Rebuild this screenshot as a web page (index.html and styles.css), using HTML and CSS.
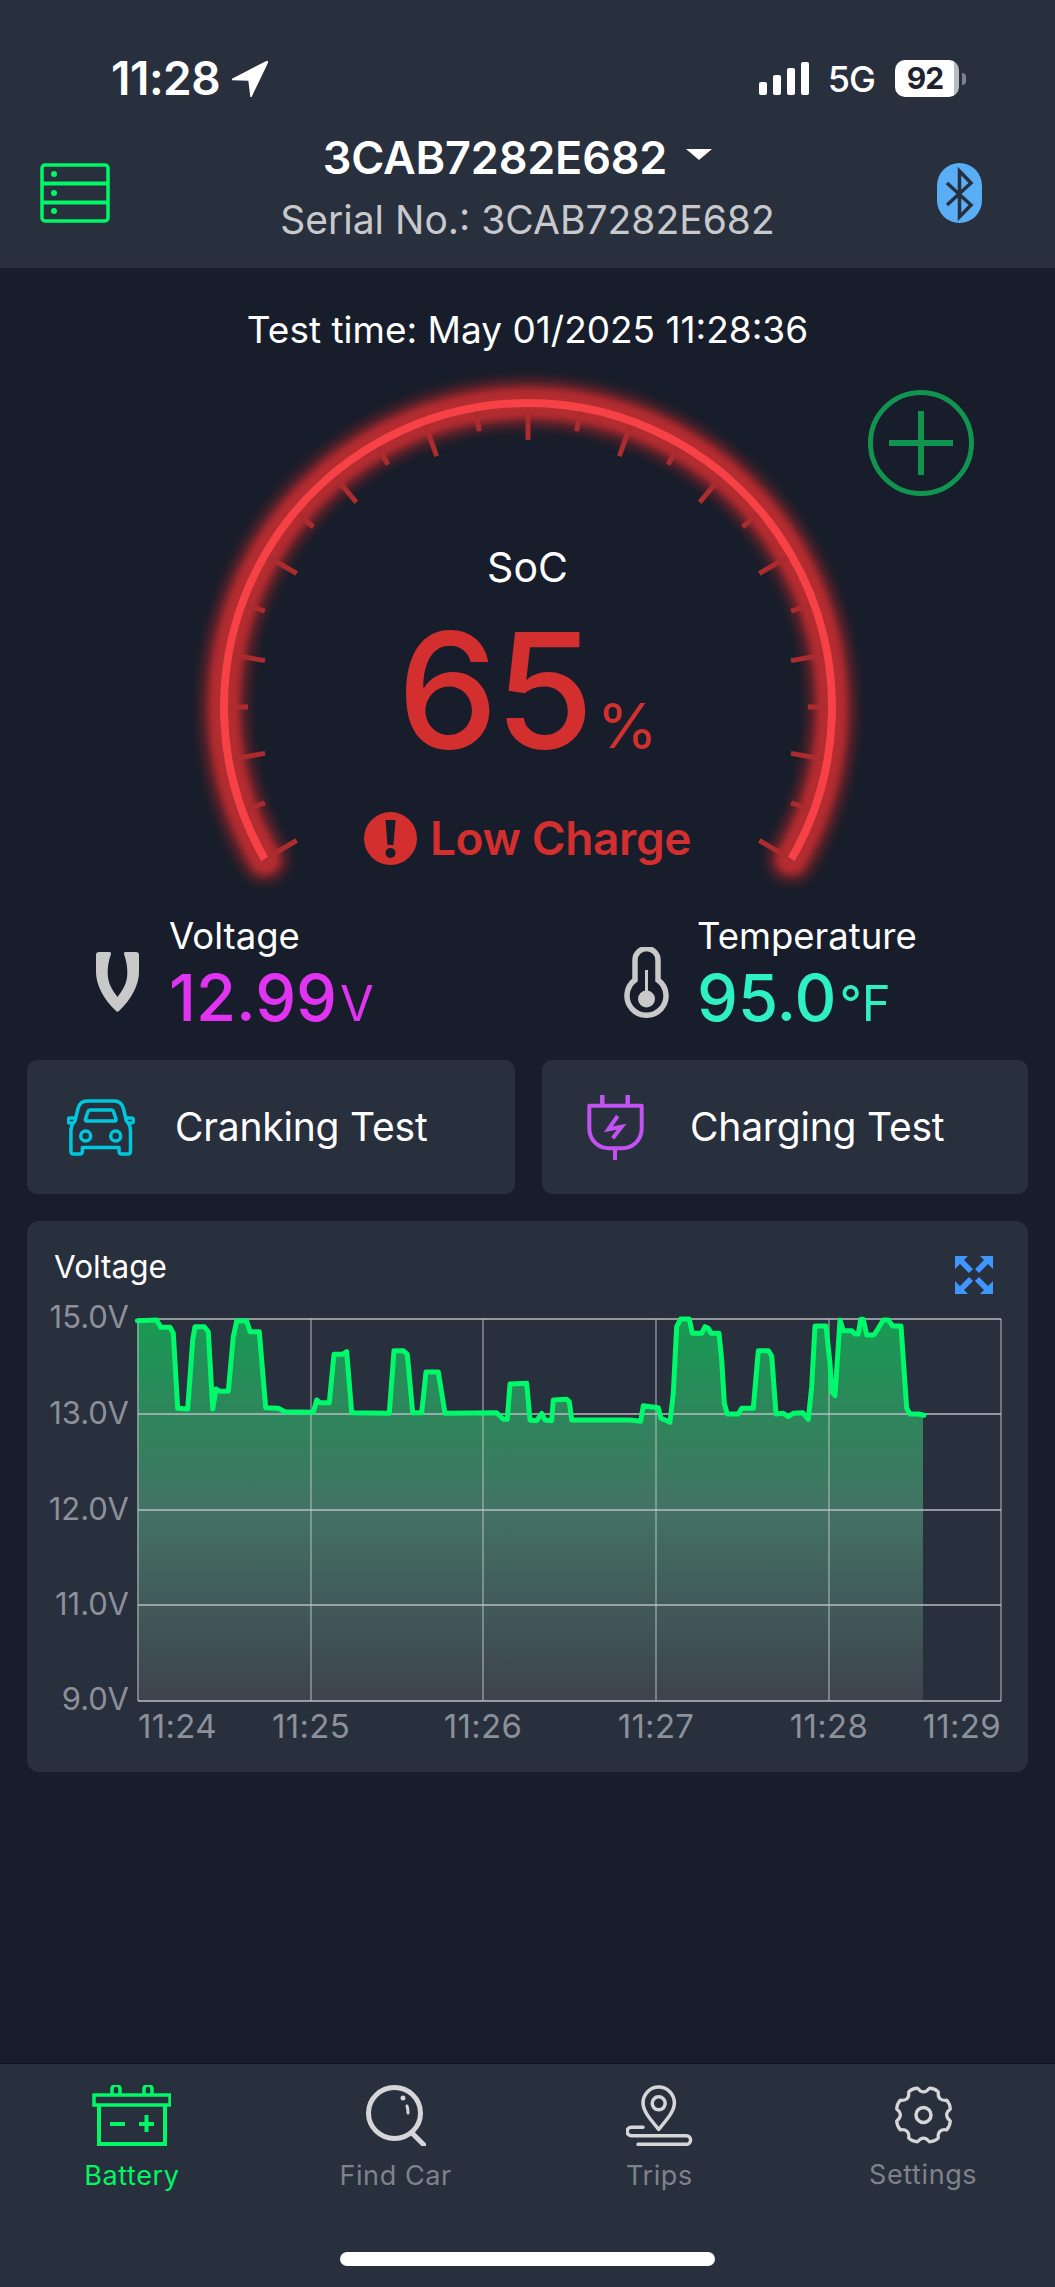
FILE: index.html
```html
<!DOCTYPE html>
<html lang="en">
<head>
<meta charset="utf-8">
<title>Battery</title>
<link rel="stylesheet" href="styles.css">
</head>
<body>
<div class="page">
  <header class="header">
    <div class="status">
      <div class="status-left">
        <span class="clock">11:28</span>
        <svg class="loc" viewBox="0 0 36 36"><path d="M36 0 0 18.500 17 19 19 35.500Z" stroke="#fff" stroke-width="1.500" stroke-linejoin="round" fill="#fff"/></svg>
      </div>
      <div class="status-right">
        <div class="signal"><i class="b1"></i><i class="b2"></i><i class="b3"></i><i class="b4"></i></div>
        <span class="net">5G</span>
        <div class="batt"><span class="batt-num">92</span></div>
        <div class="batt-nub"></div>
      </div>
    </div>
    <div class="titlebar">
      <svg class="ic-list" viewBox="0 0 70 60" fill="none" stroke="#00f765" stroke-width="3.500">
        <rect x="2" y="2" width="66" height="56" rx="3"/><path d="M2 20.500H68M2 39.500H68" stroke-width="4"/>
        <circle cx="14" cy="11" r="3" fill="#00f765" stroke="none"/><circle cx="14" cy="30" r="3" fill="#00f765" stroke="none"/><circle cx="14" cy="48" r="3" fill="#00f765" stroke="none"/>
      </svg>
      <div class="title-mid">
        <div class="name-row"><span class="name">3CAB7282E682</span><svg class="caret" viewBox="0 0 26 11"><path d="M0 0H26L13 11Z" fill="#fff"/></svg></div>
        <div class="serial">Serial No.: 3CAB7282E682</div>
      </div>
      <svg class="ic-bt" viewBox="0 0 45 60">
        <rect x="0" y="0" width="45" height="60" rx="22.500" fill="#5aaef5"/>
        <path d="M10 20 34 42 22.500 54V8L34 20 10 42" fill="none" stroke="#27303e" stroke-width="3.500"/>
      </svg>
    </div>
  </header>

  <main class="main">
    <div class="test-time">Test time: May 01/2025 11:28:36</div>

    <section class="gauge">
      <svg class="gauge-svg" viewBox="0 352 1055 560">
        <path class="arc-glow-wide" d="M264.700 859A304 304 0 1 1 791.300 859" />
        <path class="arc-glow" d="M264.700 859A304 304 0 1 1 791.300 859" />
        <g class="ticks">
          <line class="t-long" x1="528" y1="403" x2="528" y2="440"/>
          <line x1="528" y1="403" x2="528" y2="427" transform="rotate(10 528 707)"/>
          <line x1="528" y1="403" x2="528" y2="440" transform="rotate(20 528 707)"/>
          <line x1="528" y1="403" x2="528" y2="427" transform="rotate(30 528 707)"/>
          <line x1="528" y1="403" x2="528" y2="440" transform="rotate(40 528 707)"/>
          <line x1="528" y1="403" x2="528" y2="427" transform="rotate(50 528 707)"/>
          <line x1="528" y1="403" x2="528" y2="440" transform="rotate(60 528 707)"/>
          <line x1="528" y1="403" x2="528" y2="427" transform="rotate(70 528 707)"/>
          <line x1="528" y1="403" x2="528" y2="440" transform="rotate(80 528 707)"/>
          <line x1="528" y1="403" x2="528" y2="427" transform="rotate(90 528 707)"/>
          <line x1="528" y1="403" x2="528" y2="440" transform="rotate(100 528 707)"/>
          <line x1="528" y1="403" x2="528" y2="427" transform="rotate(110 528 707)"/>
          <line x1="528" y1="403" x2="528" y2="440" transform="rotate(120 528 707)"/>
          <line x1="528" y1="403" x2="528" y2="427" transform="rotate(-10 528 707)"/>
          <line x1="528" y1="403" x2="528" y2="440" transform="rotate(-20 528 707)"/>
          <line x1="528" y1="403" x2="528" y2="427" transform="rotate(-30 528 707)"/>
          <line x1="528" y1="403" x2="528" y2="440" transform="rotate(-40 528 707)"/>
          <line x1="528" y1="403" x2="528" y2="427" transform="rotate(-50 528 707)"/>
          <line x1="528" y1="403" x2="528" y2="440" transform="rotate(-60 528 707)"/>
          <line x1="528" y1="403" x2="528" y2="427" transform="rotate(-70 528 707)"/>
          <line x1="528" y1="403" x2="528" y2="440" transform="rotate(-80 528 707)"/>
          <line x1="528" y1="403" x2="528" y2="427" transform="rotate(-90 528 707)"/>
          <line x1="528" y1="403" x2="528" y2="440" transform="rotate(-100 528 707)"/>
          <line x1="528" y1="403" x2="528" y2="427" transform="rotate(-110 528 707)"/>
          <line x1="528" y1="403" x2="528" y2="440" transform="rotate(-120 528 707)"/>
        </g>
        <path class="arc-core" d="M264.700 859A304 304 0 1 1 791.300 859" />
      </svg>
      <div class="gauge-center">
        <div class="soc">SoC</div>
        <div class="soc-val">65<span class="soc-pct">%</span></div>
        <div class="soc-state">
          <svg class="ic-warn" viewBox="0 0 53 53"><circle cx="26.500" cy="26.500" r="26.500" fill="#d32f2f"/><path d="M21.500 8H31.500L29.500 33H23.500Z" fill="#171d2a"/><circle cx="26.500" cy="41" r="5" fill="#171d2a"/></svg>
          <span>Low Charge</span>
        </div>
      </div>
      <svg class="ic-plus" viewBox="0 0 106 106" fill="none" stroke="#11944f" stroke-width="5"><circle cx="53" cy="53" r="50.500"/><path d="M53 21V85M21 53H85" stroke-width="6"/></svg>
    </section>

    <section class="metrics">
      <div class="metric">
        <svg class="ic-volt" viewBox="0 0 43 60"><path d="M0 3Q0 0 3 0H13Q15.500 0 15 2C12.500 9 11.500 16 11.700 22 12 31 16 38 21.500 45 27 38 31 31 31.300 22 31.500 16 30.500 9 28 2Q27.500 0 30 0H40Q43 0 43 3V20C43 32 36 47 23 59Q21.500 60.500 20 59C7 47 0 32 0 20Z" fill="#c9c9c9"/></svg>
        <div>
          <div class="m-label">Voltage</div>
          <div class="m-value volt">12.99<span class="m-unit">V</span></div>
        </div>
      </div>
      <div class="metric temp-metric">
        <svg class="ic-temp" viewBox="0 0 45 72" fill="none" stroke="#c9c9c9" stroke-width="5.500"><path d="M11 33V13A11.500 11.500 0 0 1 34 13V33A19.500 19.500 0 1 1 11 33Z"/><path d="M22.500 23V48" stroke-width="3"/><circle cx="22.500" cy="52" r="8.500" fill="#c9c9c9" stroke="none"/></svg>
        <div>
          <div class="m-label">Temperature</div>
          <div class="m-value temp">95.0<span class="m-unit">°F</span></div>
        </div>
      </div>
    </section>

    <section class="actions">
      <div class="action">
        <svg class="ic-car" viewBox="0 0 68 57" fill="none" stroke="#00c8dc" stroke-width="3.500" stroke-linejoin="round" stroke-linecap="round">
          <path d="M8 22 11 9.500Q13 2 20 2H47.400Q54.400 2 56.400 9.500L59.400 22Q63.500 26 63.500 32V52Q63.500 55 61 55H54.500Q52 55 52 52V48.500H15.400V52Q15.400 55 13 55H6.400Q3.900 55 3.900 52V32Q3.900 26 8 22Z"/>
          <path d="M23 11H44.500Q46 11 46.500 12.500L49 20Q49.500 22 47.500 22H20Q18 22 18.500 20L21 12.500Q21.500 11 23 11Z"/>
          <path d="M8 19H3Q1 19 1 21.500 1 24 3 24H6M59.400 19H64.400Q66.400 19 66.400 21.500 66.400 24 64.400 24H61.400"/>
          <circle cx="18.700" cy="37" r="5"/><circle cx="48.700" cy="37" r="5"/>
        </svg>
        <span>Cranking Test</span>
      </div>
      <div class="action">
        <svg class="ic-plug" viewBox="0 0 57 65" fill="none" stroke="#c252f2" stroke-width="4">
          <path d="M15.300 0V11M40.700 0V11" stroke-width="4.500"/>
          <path d="M2.300 10.700H54.700V33.300C54.700 45 46 53.300 35 53.300H22C11 53.300 2.300 45 2.300 33.300Z" stroke-linejoin="round"/>
          <path d="M28 53.300V65" stroke-width="4"/>
          <path d="M30.700 21 21.300 34.300 34.700 31.700 25.700 43.300"/>
        </svg>
        <span>Charging Test</span>
      </div>
    </section>

    <section class="chart-card">
      <svg class="chart-svg" viewBox="27 1221 1001 551">
        <defs>
          <linearGradient id="area" x1="0" y1="1319" x2="0" y2="1701" gradientUnits="userSpaceOnUse">
            <stop offset="0" stop-color="#189a53"/>
            <stop offset="0.5" stop-color="#437264"/>
            <stop offset="1" stop-color="#3e424e"/>
          </linearGradient>
        </defs>
        <text class="c-title" x="54" y="1278">Voltage</text>
        <g fill="#3f96ff">
          <path d="M955 1256H968L964 1260 973 1269 969 1273 960 1264 955 1269Z"/>
          <path d="M993 1256H980L984 1260 975 1269 979 1273 988 1264 993 1269Z"/>
          <path d="M955 1294H968L964 1290 973 1281 969 1277 960 1286 955 1281Z"/>
          <path d="M993 1294H980L984 1290 975 1281 979 1277 988 1286 993 1281Z"/>
        </g>
        <polygon fill="url(#area)" points="137.300,1701 137.300,1320.700 156.700,1320 160.700,1327.300 170,1327.300 173.300,1333.300 177.700,1408.300 187.700,1409 192.700,1340 195,1326.700 204.300,1326.700 208.300,1331.700 212.700,1409 216,1389 220,1391.300 228.300,1391.300 233.300,1336.700 236.700,1321 246.700,1321 250,1331.700 259.300,1331.700 265.700,1407.700 278.300,1408.300 285,1411.700 313.300,1412.300 316.700,1400 320,1402.700 329.300,1402.700 334,1354.300 342.700,1354.300 346.700,1351.700 351.700,1412.700 389.300,1413.300 394,1350.700 403.300,1350.700 407.300,1354.300 412.700,1412.700 421.700,1412.700 426,1372 438.300,1372 445,1413.300 496.700,1412.700 503.300,1419.300 507.300,1419.300 510,1384 526.700,1383.300 530,1420 536.700,1420.700 541.700,1413.300 545,1420 551.700,1420.700 553.300,1400 566.700,1399.300 569.300,1401.700 571.700,1420 630,1420 640.700,1421.300 643.300,1405.700 658.300,1407.700 661,1418.300 670,1422.300 673.300,1393.300 676.700,1326.700 680.700,1319 689.300,1319 692.300,1333.300 701.700,1333.300 705,1326.700 708.300,1328.300 711,1333.300 719,1333.300 721.700,1360 724.300,1403.300 727.300,1414 738.300,1414 741.700,1408.300 753.300,1408.300 758.300,1350.700 768.300,1350.700 771.700,1356 776,1414 783.300,1413.300 788.300,1416.700 793.300,1413.300 802.700,1412.700 808.300,1419.300 811.700,1386.700 815,1326 826,1326 830,1363.300 831.700,1391.700 835,1395.700 840,1320 843.300,1330.700 851.700,1330.700 855,1334 858.300,1334 860.700,1319.300 863.300,1319.300 866.700,1335 874,1335 878.300,1328.300 883.300,1320 888.300,1320 892.700,1326 901,1326 906.700,1408.300 910,1414 918.300,1414 923,1415.300 923,1701"/>
        <g class="grid-y">
          <line x1="138" x2="1001" y1="1319" y2="1319"/><line x1="138" x2="1001" y1="1414" y2="1414"/><line x1="138" x2="1001" y1="1510" y2="1510"/><line x1="138" x2="1001" y1="1605" y2="1605"/><line x1="138" x2="1001" y1="1701" y2="1701"/>
        </g>
        <g class="grid-x">
          <line x1="138" x2="138" y1="1319" y2="1701"/><line x1="311" x2="311" y1="1319" y2="1701"/><line x1="483" x2="483" y1="1319" y2="1701"/><line x1="656" x2="656" y1="1319" y2="1701"/><line x1="829" x2="829" y1="1319" y2="1701"/><line x1="1001" x2="1001" y1="1319" y2="1701"/>
        </g>
        <polyline class="volt-line" points="137.300,1320.700 156.700,1320 160.700,1327.300 170,1327.300 173.300,1333.300 177.700,1408.300 187.700,1409 192.700,1340 195,1326.700 204.300,1326.700 208.300,1331.700 212.700,1409 216,1389 220,1391.300 228.300,1391.300 233.300,1336.700 236.700,1321 246.700,1321 250,1331.700 259.300,1331.700 265.700,1407.700 278.300,1408.300 285,1411.700 313.300,1412.300 316.700,1400 320,1402.700 329.300,1402.700 334,1354.300 342.700,1354.300 346.700,1351.700 351.700,1412.700 389.300,1413.300 394,1350.700 403.300,1350.700 407.300,1354.300 412.700,1412.700 421.700,1412.700 426,1372 438.300,1372 445,1413.300 496.700,1412.700 503.300,1419.300 507.300,1419.300 510,1384 526.700,1383.300 530,1420 536.700,1420.700 541.700,1413.300 545,1420 551.700,1420.700 553.300,1400 566.700,1399.300 569.300,1401.700 571.700,1420 630,1420 640.700,1421.300 643.300,1405.700 658.300,1407.700 661,1418.300 670,1422.300 673.300,1393.300 676.700,1326.700 680.700,1319 689.300,1319 692.300,1333.300 701.700,1333.300 705,1326.700 708.300,1328.300 711,1333.300 719,1333.300 721.700,1360 724.300,1403.300 727.300,1414 738.300,1414 741.700,1408.300 753.300,1408.300 758.300,1350.700 768.300,1350.700 771.700,1356 776,1414 783.300,1413.300 788.300,1416.700 793.300,1413.300 802.700,1412.700 808.300,1419.300 811.700,1386.700 815,1326 826,1326 830,1363.300 831.700,1391.700 835,1395.700 840,1320 843.300,1330.700 851.700,1330.700 855,1334 858.300,1334 860.700,1319.300 863.300,1319.300 866.700,1335 874,1335 878.300,1328.300 883.300,1320 888.300,1320 892.700,1326 901,1326 906.700,1408.300 910,1414 918.300,1414 924,1415.300"/>
        <g class="y-labels">
          <text x="129" y="1328">15.0V</text><text x="129" y="1424">13.0V</text><text x="129" y="1520">12.0V</text><text x="129" y="1615">11.0V</text><text x="129" y="1710">9.0V</text>
        </g>
        <g class="x-labels">
          <text class="start" x="138" y="1738">11:24</text><text x="311" y="1738">11:25</text><text x="483" y="1738">11:26</text><text x="656" y="1738">11:27</text><text x="829" y="1738">11:28</text><text class="end" x="1001" y="1738">11:29</text>
        </g>
      </svg>
    </section>
  </main>

  <nav class="nav">
    <div class="tabs">
      <div class="tab active">
        <svg class="ic-nav" width="79" height="61" viewBox="0 0 79 61" fill="none" stroke="#00f765" stroke-width="3.500">
          <path d="M20 9V4A4 4 0 0 1 28 4V9M52 9V4A4 4 0 0 1 60 4V9"/>
          <rect x="2" y="10" width="76" height="10"/>
          <path d="M7 20V59H73V20" stroke-width="4"/>
          <path d="M18 39H33M47 39H62M54.500 30V47" stroke-width="4"/>
        </svg>
        <span>Battery</span>
      </div>
      <div class="tab">
        <svg class="ic-nav" width="60" height="61" viewBox="0 0 60 61" fill="none" stroke="#d6d6d8" stroke-width="5" stroke-linecap="round">
          <ellipse cx="28.500" cy="28" rx="26" ry="25.500"/>
          <path d="M46 48 58 60"/>
          <path d="M41 21Q42 24 42 28" stroke-width="3"/><circle cx="37" cy="13" r="1.500" fill="#d6d6d8" stroke-width="2"/>
        </svg>
        <span>Find Car</span>
      </div>
      <div class="tab">
        <svg class="ic-nav" width="67" height="61" viewBox="0 0 67 61" fill="none" stroke="#d6d6d8" stroke-width="3.500" stroke-linecap="round" stroke-linejoin="round">
          <path d="M32.700 44.300C24 34 17 26 17 18A15.700 16 0 0 1 48.400 18C48.400 26 41.400 34 32.700 44.300Z"/>
          <circle cx="32.700" cy="18.300" r="6.500"/>
          <path d="M17 42.300H5.300A4.200 4.200 0 0 0 5.300 50.700H60.300A4.300 4.300 0 0 1 60.300 59.300H12"/>
        </svg>
        <span>Trips</span>
      </div>
      <div class="tab">
        <svg class="ic-nav" width="59" height="60" viewBox="0 0 59 60" fill="none" stroke="#d6d6d8" stroke-width="3.500" stroke-linejoin="round">
          <path transform="translate(29.500 30) scale(.93)" d="M6.400 -28.800Q11.900 -28.600 15.900 -24.900 14.800 -14.800 24.900 -15.900 28.600 -11.900 28.800 -6.400 21 0 28.800 6.400 28.600 11.900 24.900 15.900 14.800 14.800 15.900 24.900 11.900 28.600 6.400 28.800 0 21 -6.400 28.800 -11.900 28.600 -15.900 24.900 -14.800 14.800 -24.900 15.900 -28.600 11.900 -28.800 6.400 -21 0 -28.800 -6.400 -28.600 -11.900 -24.900 -15.900 -14.800 -14.800 -15.900 -24.900 -11.900 -28.600 -6.400 -28.800 0 -21 6.400 -28.800Z"/>
          <circle cx="29.500" cy="30" r="7.500"/>
        </svg>
        <span>Settings</span>
      </div>
    </div>
    <div class="home-bar"></div>
  </nav>
</div>
</body>
</html>
```

FILE: styles.css
```css
* { box-sizing: border-box; }
html, body { margin: 0; padding: 0; }
body { background: #171d2a; font-family: Inter, "Liberation Sans", sans-serif; color: #fff; }
.page { width: 1055px; height: 2287px; display: flex; flex-direction: column; overflow: hidden; }

.header { height: 268px; background: #282f3d; flex: none; padding-top: 50px; }
.status { height: 57px; display: flex; justify-content: space-between; align-items: center; padding: 0 89px 0 111px; }
.status-left { display: flex; align-items: center; gap: 12px; }
.clock { font-size: 46px; font-weight: 600; letter-spacing: -0.5px; line-height: 57px; }
.loc { width: 36px; height: 36px; display: block; }
.status-right { display: flex; align-items: center; }
.signal { display: flex; align-items: flex-end; gap: 6px; height: 33px; }
.signal i { display: block; width: 8px; background: #fff; border-radius: 2px; }
.b1 { height: 13px; } .b2 { height: 20px; } .b3 { height: 27px; } .b4 { height: 33px; }
.net { font-size: 36px; font-weight: 500; margin: 0 20px 0 19px; letter-spacing: -1px; line-height: 40px; }
.batt { width: 64px; height: 37px; border-radius: 10px; background: linear-gradient(90deg, #fff 0 92%, #b8bbc0 92%); display: flex; align-items: center; justify-content: center; padding-right: 4px; }
.batt-num { color: #1d2430; font-size: 30px; font-weight: 700; letter-spacing: -1px; line-height: 37px; }
.batt-nub { width: 4px; height: 12px; margin-left: 3px; border-radius: 0 4px 4px 0; background: #7d828c; }

.titlebar { display: grid; grid-template-columns: 1fr auto 1fr; margin-top: 25px; }
.ic-list { width: 70px; height: 60px; margin: 31px 0 0 40px; justify-self: start; }
.ic-bt { width: 45px; height: 60px; margin: 31px 73px 0 0; justify-self: end; }
.title-mid { display: flex; flex-direction: column; align-items: center; }
.name-row { display: flex; align-items: center; gap: 19px; padding-right: 20px; height: 52px; }
.name { font-size: 45px; font-weight: 600; line-height: 50px; letter-spacing: -0.2px; }
.caret { width: 26px; height: 11px; margin-bottom: 8px; }
.serial { font-size: 39px; line-height: 44px; margin-top: 14px; color: #c8c9cc; }

.main { flex: 1; padding-top: 40px; }
.test-time { text-align: center; font-size: 37px; line-height: 44px; }

.gauge { position: relative; height: 560px; }
.gauge-svg { display: block; width: 1055px; height: 560px; }
.arc-core, .arc-glow, .arc-glow-wide { fill: none; }
.arc-core { stroke: #f64146; stroke-width: 8px; }
.arc-glow { stroke: #b42c30; stroke-width: 30px; stroke-linecap: round; filter: blur(3px); }
.arc-glow-wide { stroke: #8f2429; stroke-width: 46px; stroke-linecap: round; filter: blur(6px); opacity: .75; }
.ticks line { stroke: #ab2b2f; stroke-width: 5px; }
.gauge-center { position: absolute; top: 190px; left: 0; width: 1055px; display: flex; flex-direction: column; align-items: center; }
.soc { font-size: 41px; line-height: 50px; }
.soc-val { font-size: 160px; font-weight: 450; line-height: 160px; color: #d32f2f; margin-top: 18px; letter-spacing: -3px; }
.soc-pct { font-size: 62px; font-weight: 400; margin-left: 6px; letter-spacing: 0; }
.soc-state { display: flex; align-items: center; gap: 13px; margin-top: 2px; color: #d32f2f; font-size: 46px; font-weight: 600; line-height: 60px; letter-spacing: -0.4px; }
.ic-warn { width: 53px; height: 53px; display: block; }
.ic-plus { position: absolute; left: 868px; top: 38px; width: 106px; height: 106px; }

.metrics { display: grid; grid-template-columns: 528px 1fr; height: 148px; padding: 2px 0 0 96px; }
.metric { display: flex; gap: 30px; }
.temp-metric { gap: 28px; }
.ic-volt { width: 43px; height: 60px; margin-top: 38px; flex: none; }
.ic-temp { width: 45px; height: 72px; margin-top: 33px; flex: none; }
.m-label { font-size: 36.500px; line-height: 44px; }
.m-value { font-size: 65px; font-weight: 500; line-height: 70px; margin-top: 5px; }
.m-unit { font-size: 49px; margin-left: 3px; font-weight: 400; }
.volt { color: #e034f2; }
.temp { color: #2ff0c4; }

.actions { display: grid; grid-template-columns: 488px 486px; gap: 27px; padding-left: 27px; height: 134px; }
.action { background: #282f3d; border-radius: 10px; display: flex; align-items: center; font-size: 39px; line-height: 50px; letter-spacing: -0.2px; }
.ic-car { width: 68px; height: 57px; margin: 0 40px 0 40px; flex: none; }
.ic-plug { width: 57px; height: 65px; margin: 0 46px 0 45px; flex: none; }

.chart-card { margin: 27px 0 0 27px; width: 1001px; height: 551px; background: #282f3d; border-radius: 12px; }
.chart-svg { display: block; width: 1001px; height: 551px; }
.c-title { font-size: 31.500px; fill: #fff; }
.grid-y line { stroke: #b7bbc0; stroke-width: 2px; opacity: .75; }
.grid-x line { stroke: #c8cbcf; stroke-width: 1.200px; opacity: .75; }
.volt-line { fill: none; stroke: #00f96b; stroke-width: 5px; stroke-linejoin: round; stroke-linecap: round; }
.y-labels text { font-size: 31px; fill: #8c909a; text-anchor: end; }
.x-labels text { font-size: 33px; fill: #8c909a; text-anchor: middle; letter-spacing: .3px; }
.x-labels .start { text-anchor: start; }
.x-labels .end { text-anchor: end; }

.nav { height: 224px; flex: none; background: #282f3d; border-top: 1px solid #111622; position: relative; }
.tabs { display: grid; grid-template-columns: repeat(4, 1fr); padding-top: 21px; }
.tab { display: flex; flex-direction: column; align-items: center; font-size: 27px; line-height: 36px; letter-spacing: .6px; color: #7f828a; }
.tab.active { color: #00f765; }
.ic-nav { display: block; margin-bottom: 12px; }
.home-bar { position: absolute; left: 340px; top: 188px; width: 375px; height: 14px; border-radius: 7px; background: #fff; }
```
